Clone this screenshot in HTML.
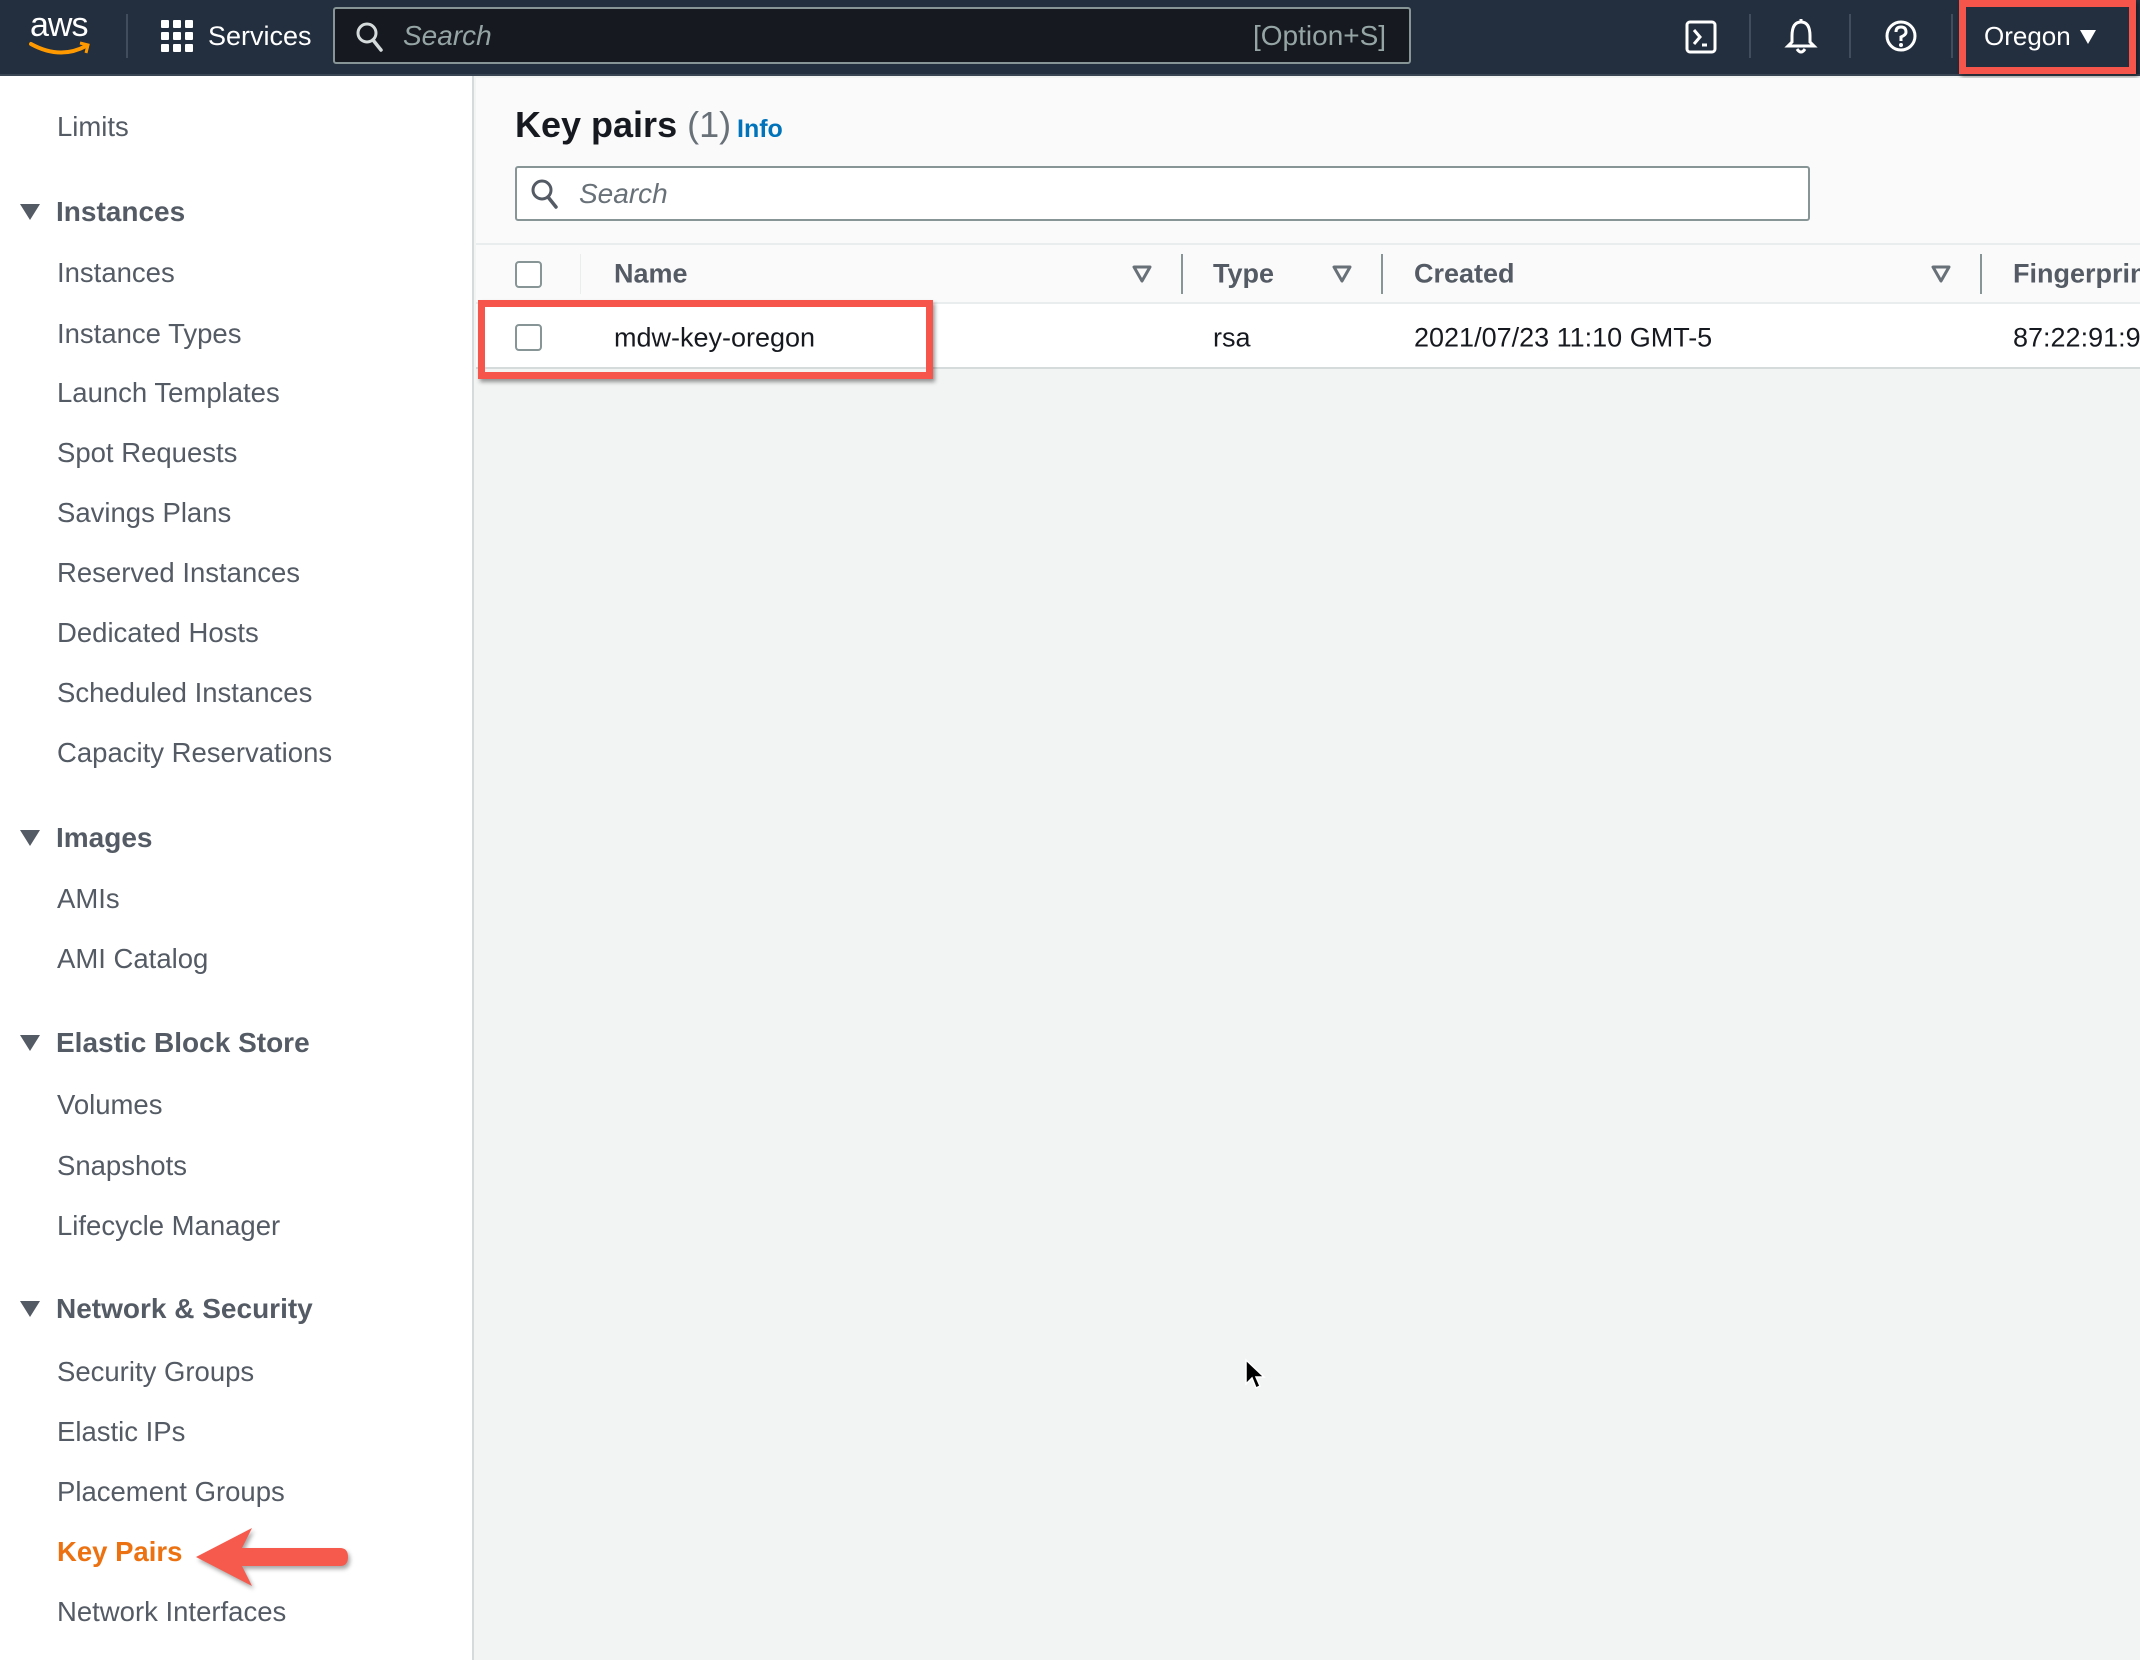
<!DOCTYPE html>
<html><head><meta charset="utf-8"><style>
*{margin:0;padding:0;box-sizing:border-box}
body{width:2140px;height:1660px;overflow:hidden;background:#f2f3f3;font-family:"Liberation Sans",sans-serif;position:relative}
.a{position:absolute;white-space:nowrap}
#top{position:absolute;left:0;top:0;width:2140px;height:76px;background:#232f3e;border-bottom:2px solid #3b4654}
#side{position:absolute;left:0;top:76px;width:474px;height:1584px;background:#fff;border-right:2px solid #d5dbdb}
.it{position:absolute;left:57px;font-size:27.5px;color:#545b64;transform:translateY(-50%)}
.hd{position:absolute;left:56px;font-size:28px;font-weight:bold;color:#545b64;transform:translateY(-50%)}
.tri{position:absolute;left:20px;width:0;height:0;border-left:10px solid transparent;border-right:10px solid transparent;border-top:16px solid #545b64;transform:translateY(-50%)}
.th{position:absolute;top:274px;font-size:27px;font-weight:bold;color:#545b64;transform:translateY(-50%)}
.td{position:absolute;top:338px;font-size:27px;color:#16191f;transform:translateY(-50%)}
.ft{position:absolute;top:264px}
.dv{position:absolute;top:254px;width:2px;height:40px;background:#879596}
.cb{position:absolute;left:515px;width:27px;height:27px;border:2px solid #879596;border-radius:4px;background:#fff}
</style></head><body>
<div id="top">
 <div class="a" style="left:30px;top:6px;color:#fff;font-size:34px;letter-spacing:-1px">aws</div>
 <svg class="a" style="left:28px;top:40px" width="66" height="18"><path d="M3 4 Q32 20 58 6" stroke="#ff9900" stroke-width="4" fill="none" stroke-linecap="round"/><path d="M52 3 L60 5 L58 13" stroke="#ff9900" stroke-width="3" fill="none"/></svg>
 <div class="a" style="left:126px;top:14px;width:2px;height:44px;background:#414d5c"></div>
 <svg class="a" style="left:161px;top:20px" width="33" height="33"><g fill="#fff"><rect x="0" y="0" width="8" height="8" rx="1"/><rect x="12" y="0" width="8" height="8" rx="1"/><rect x="24" y="0" width="8" height="8" rx="1"/><rect x="0" y="12" width="8" height="8" rx="1"/><rect x="12" y="12" width="8" height="8" rx="1"/><rect x="24" y="12" width="8" height="8" rx="1"/><rect x="0" y="24" width="8" height="8" rx="1"/><rect x="12" y="24" width="8" height="8" rx="1"/><rect x="24" y="24" width="8" height="8" rx="1"/></g></svg>
 <div class="a" style="left:208px;top:21px;color:#fff;font-size:27px">Services</div>
 <div class="a" style="left:333px;top:7px;width:1078px;height:57px;background:#16191f;border:2px solid #879596;border-radius:3px"></div>
 <svg class="a" style="left:355px;top:21px" width="30" height="32"><circle cx="12" cy="12" r="9" stroke="#d5dbdb" stroke-width="3" fill="none"/><path d="M18 19 L26 29" stroke="#d5dbdb" stroke-width="3.5" stroke-linecap="round"/></svg>
 <div class="a" style="left:403px;top:20px;color:#95a5a6;font-size:28px;font-style:italic">Search</div>
 <div class="a" style="left:1253px;top:20px;color:#95a5a6;font-size:28px">[Option+S]</div>
 <svg class="a" style="left:1685px;top:20px" width="32" height="34"><rect x="2" y="2" width="28" height="30" rx="3" stroke="#fff" stroke-width="3" fill="none"/><path d="M9 10 L15 17 L9 24" stroke="#fff" stroke-width="3" fill="none"/><path d="M17 25 L22 25" stroke="#fff" stroke-width="3"/></svg>
 <div class="a" style="left:1749px;top:14px;width:2px;height:44px;background:#414d5c"></div>
 <svg class="a" style="left:1784px;top:18px" width="34" height="38"><path d="M17 4 C9 4 8 12 8 18 L8 24 L4 28 L30 28 L26 24 L26 18 C26 12 25 4 17 4Z" stroke="#fff" stroke-width="3" fill="none"/><path d="M13 31 Q17 37 21 31" stroke="#fff" stroke-width="3" fill="none"/><path d="M17 1 L17 4" stroke="#fff" stroke-width="3"/></svg>
 <div class="a" style="left:1849px;top:14px;width:2px;height:44px;background:#414d5c"></div>
 <svg class="a" style="left:1884px;top:19px" width="34" height="34"><circle cx="17" cy="17" r="14" stroke="#fff" stroke-width="3" fill="none"/><path d="M12 13 Q12 8 17 8 Q22 8 22 13 Q22 16 17 18 L17 22" stroke="#fff" stroke-width="3" fill="none"/><circle cx="17" cy="26" r="2" fill="#fff"/></svg>
 <div class="a" style="left:1951px;top:14px;width:2px;height:44px;background:#414d5c"></div>
 <div class="a" style="left:1984px;top:21px;color:#fff;font-size:26px">Oregon</div>
 <div class="a" style="left:2080px;top:30px;width:0;height:0;border-left:8px solid transparent;border-right:8px solid transparent;border-top:14px solid #fff"></div>
</div>
<div class="a" style="left:1959px;top:0;width:177px;height:74px;border:7px solid #f5554a;box-shadow:2px 3px 4px rgba(0,0,0,.4)"></div>

<div id="side">
<div class="it" style="top:51px">Limits</div>
<div class="tri" style="top:136px"></div><div class="hd" style="top:136px">Instances</div>
<div class="it" style="top:197px">Instances</div>
<div class="it" style="top:258px">Instance Types</div>
<div class="it" style="top:317px">Launch Templates</div>
<div class="it" style="top:377px">Spot Requests</div>
<div class="it" style="top:437px">Savings Plans</div>
<div class="it" style="top:497px">Reserved Instances</div>
<div class="it" style="top:557px">Dedicated Hosts</div>
<div class="it" style="top:617px">Scheduled Instances</div>
<div class="it" style="top:677px">Capacity Reservations</div>
<div class="tri" style="top:762px"></div><div class="hd" style="top:762px">Images</div>
<div class="it" style="top:823px">AMIs</div>
<div class="it" style="top:883px">AMI Catalog</div>
<div class="tri" style="top:967px"></div><div class="hd" style="top:967px">Elastic Block Store</div>
<div class="it" style="top:1029px">Volumes</div>
<div class="it" style="top:1090px">Snapshots</div>
<div class="it" style="top:1150px">Lifecycle Manager</div>
<div class="tri" style="top:1233px"></div><div class="hd" style="top:1233px">Network &amp; Security</div>
<div class="it" style="top:1296px">Security Groups</div>
<div class="it" style="top:1356px">Elastic IPs</div>
<div class="it" style="top:1416px">Placement Groups</div>
<div class="it" style="top:1476px;color:#ec7211;font-weight:bold">Key Pairs</div>
<div class="it" style="top:1536px">Network Interfaces</div>
</div>
<svg class="a" style="left:190px;top:1520px" width="170" height="75"><g style="filter:drop-shadow(2px 3px 2px rgba(0,0,0,.35))"><path d="M6 37 L62 8 L52 28 L150 28 Q158 28 158 37 Q158 46 150 46 L52 46 L62 66 Z" fill="#f65a4c"/></g></svg>

<div class="a" style="left:476px;top:78px;width:1664px;height:165px;background:#fafafa"></div>
<div class="a" style="left:515px;top:104px;font-size:36px;font-weight:bold;color:#16191f">Key pairs <span style="font-weight:normal;color:#687078">(1)</span></div>
<div class="a" style="left:737px;top:115px;font-size:25px;font-weight:bold;color:#0073bb">Info</div>
<div class="a" style="left:515px;top:166px;width:1295px;height:55px;background:#fff;border:2px solid #879596;border-radius:3px"></div>
<svg class="a" style="left:530px;top:178px" width="30" height="32"><circle cx="12" cy="12" r="9" stroke="#545b64" stroke-width="3" fill="none"/><path d="M18 19 L26 29" stroke="#545b64" stroke-width="3.5" stroke-linecap="round"/></svg>
<div class="a" style="left:579px;top:178px;font-size:28px;font-style:italic;color:#687078">Search</div>

<div class="a" style="left:476px;top:243px;width:1664px;height:61px;background:#fafafa;border-top:2px solid #eaeded;border-bottom:2px solid #eaeded"></div>
<div class="a" style="left:476px;top:304px;width:1664px;height:65px;background:#fff;border-bottom:2px solid #d5dbdb"></div>
<div class="cb" style="top:261px"></div>
<div class="a" style="left:580px;top:254px;width:1px;height:40px;background:#eaeded"></div>
<div class="th" style="left:614px">Name</div>
<svg class="ft" style="left:1131px" width="22" height="20"><path d="M3 3 L19 3 L11 17 Z" fill="none" stroke="#687078" stroke-width="3" stroke-linejoin="round"/></svg><div class="dv" style="left:1181px"></div>
<div class="th" style="left:1213px">Type</div>
<svg class="ft" style="left:1331px" width="22" height="20"><path d="M3 3 L19 3 L11 17 Z" fill="none" stroke="#687078" stroke-width="3" stroke-linejoin="round"/></svg><div class="dv" style="left:1381px"></div>
<div class="th" style="left:1414px">Created</div>
<svg class="ft" style="left:1930px" width="22" height="20"><path d="M3 3 L19 3 L11 17 Z" fill="none" stroke="#687078" stroke-width="3" stroke-linejoin="round"/></svg><div class="dv" style="left:1980px"></div>
<div class="th" style="left:2013px">Fingerprint</div>
<div class="cb" style="top:324px"></div>
<div class="td" style="left:614px">mdw-key-oregon</div>
<div class="td" style="left:1213px">rsa</div>
<div class="td" style="left:1414px">2021/07/23 11:10 GMT-5</div>
<div class="td" style="left:2013px">87:22:91:9</div>
<div class="a" style="left:478px;top:300px;width:455px;height:79px;border:7px solid #f5554a;box-shadow:2px 3px 4px rgba(0,0,0,.4)"></div>

<svg class="a" style="left:1244px;top:1358px" width="24" height="34"><path d="M2 2 L2 26 L8 20 L12 30 L16 28 L12 19 L20 19 Z" fill="#000" stroke="#fff" stroke-width="1.5"/></svg>
</body></html>
